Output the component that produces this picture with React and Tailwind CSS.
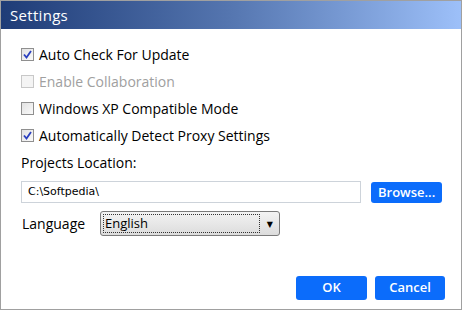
import { useState } from "react";

const font = { fontFamily: '"Open Sans", "DejaVu Sans", sans-serif' };

function Check({ checked, disabled, label }) {
  return (
    <label className="flex items-center h-[27px] gap-[5px]">
      <span
        className={`w-[13px] h-[13px] border flex items-center justify-center ${
          disabled ? "border-[#c8c8c8] bg-[#f4f4f4]" : "border-[#8f8f8f] bg-gradient-to-br from-[#e2e2e2] to-[#fafafa]"
        }`}
      >
        {checked && (
          <svg width="9" height="9" viewBox="0 0 9 9">
            <path d="M1 4.5 L3.5 7.5 L8 1" stroke="#2a3fbf" strokeWidth="1.8" fill="none" />
          </svg>
        )}
      </span>
      <span className={`text-[14px] ${disabled ? "text-[#a0a0a0]" : "text-black"}`}>{label}</span>
    </label>
  );
}

export default function App() {
  const [path] = useState("C:\\Softpedia\\");

  return (
    <div className="w-[462px] h-[310px] bg-white border border-[#a0a0a0] flex flex-col" style={font}>
      <div className="h-[28px] shrink-0 bg-gradient-to-r from-[#1f3c77] via-[#5576b0] to-[#9dc0f9] flex items-center px-[9px]">
        <span className="text-white text-[15px] tracking-[0.3px]">Settings</span>
      </div>

      <div className="flex-1 flex flex-col pl-[20px] pr-[19px] pt-[12px]">
        <Check checked label="Auto Check For Update" />
        <Check disabled label="Enable Collaboration" />
        <Check label="Windows XP Compatible Mode" />
        <Check checked label="Automatically Detect Proxy Settings" />

        <div className="text-[14px] mt-[3px] h-[20px] flex items-center">Projects Location:</div>

        <div className="flex items-center gap-[10px] mt-[9px]">
          <div
            className="w-[341px] h-[22px] border border-[#cdd3da] flex items-center px-[6px] text-black"
            style={{ fontFamily: '"DejaVu Sans", sans-serif', fontSize: "11px" }}
          >
            {path}
          </div>
          <button className="w-[71px] h-[21px] rounded-[3px] bg-[#0b6cfb] text-white text-[13px] font-semibold leading-none">
            Browse...
          </button>
        </div>

        <div className="flex items-center mt-[8px]">
          <span className="w-[79px] text-[14px] pl-[1px]">Language</span>
          <div className="w-[180px] h-[25px] border border-[#7a7a7a] rounded-[3px] bg-gradient-to-b from-[#f3f3f3] to-[#dcdcdc] flex items-center pl-[2px] pr-[6px]">
            <div className="flex-1 h-[19px] border border-dotted border-[#333] flex items-center pl-[1px] text-[13px]">
              English
            </div>
            <span className="ml-[7px] text-[8px] text-black">▼</span>
          </div>
        </div>

        <div className="flex-1" />

        <div className="flex justify-end gap-[8px] mb-[9px] mr-[-3px]">
          <button className="w-[71px] h-[24px] rounded-[3px] bg-[#0b6cfb] text-white text-[13px] font-semibold">
            OK
          </button>
          <button className="w-[70px] h-[24px] rounded-[3px] bg-[#0b6cfb] text-white text-[13px] font-semibold">
            Cancel
          </button>
        </div>
      </div>
    </div>
  );
}
